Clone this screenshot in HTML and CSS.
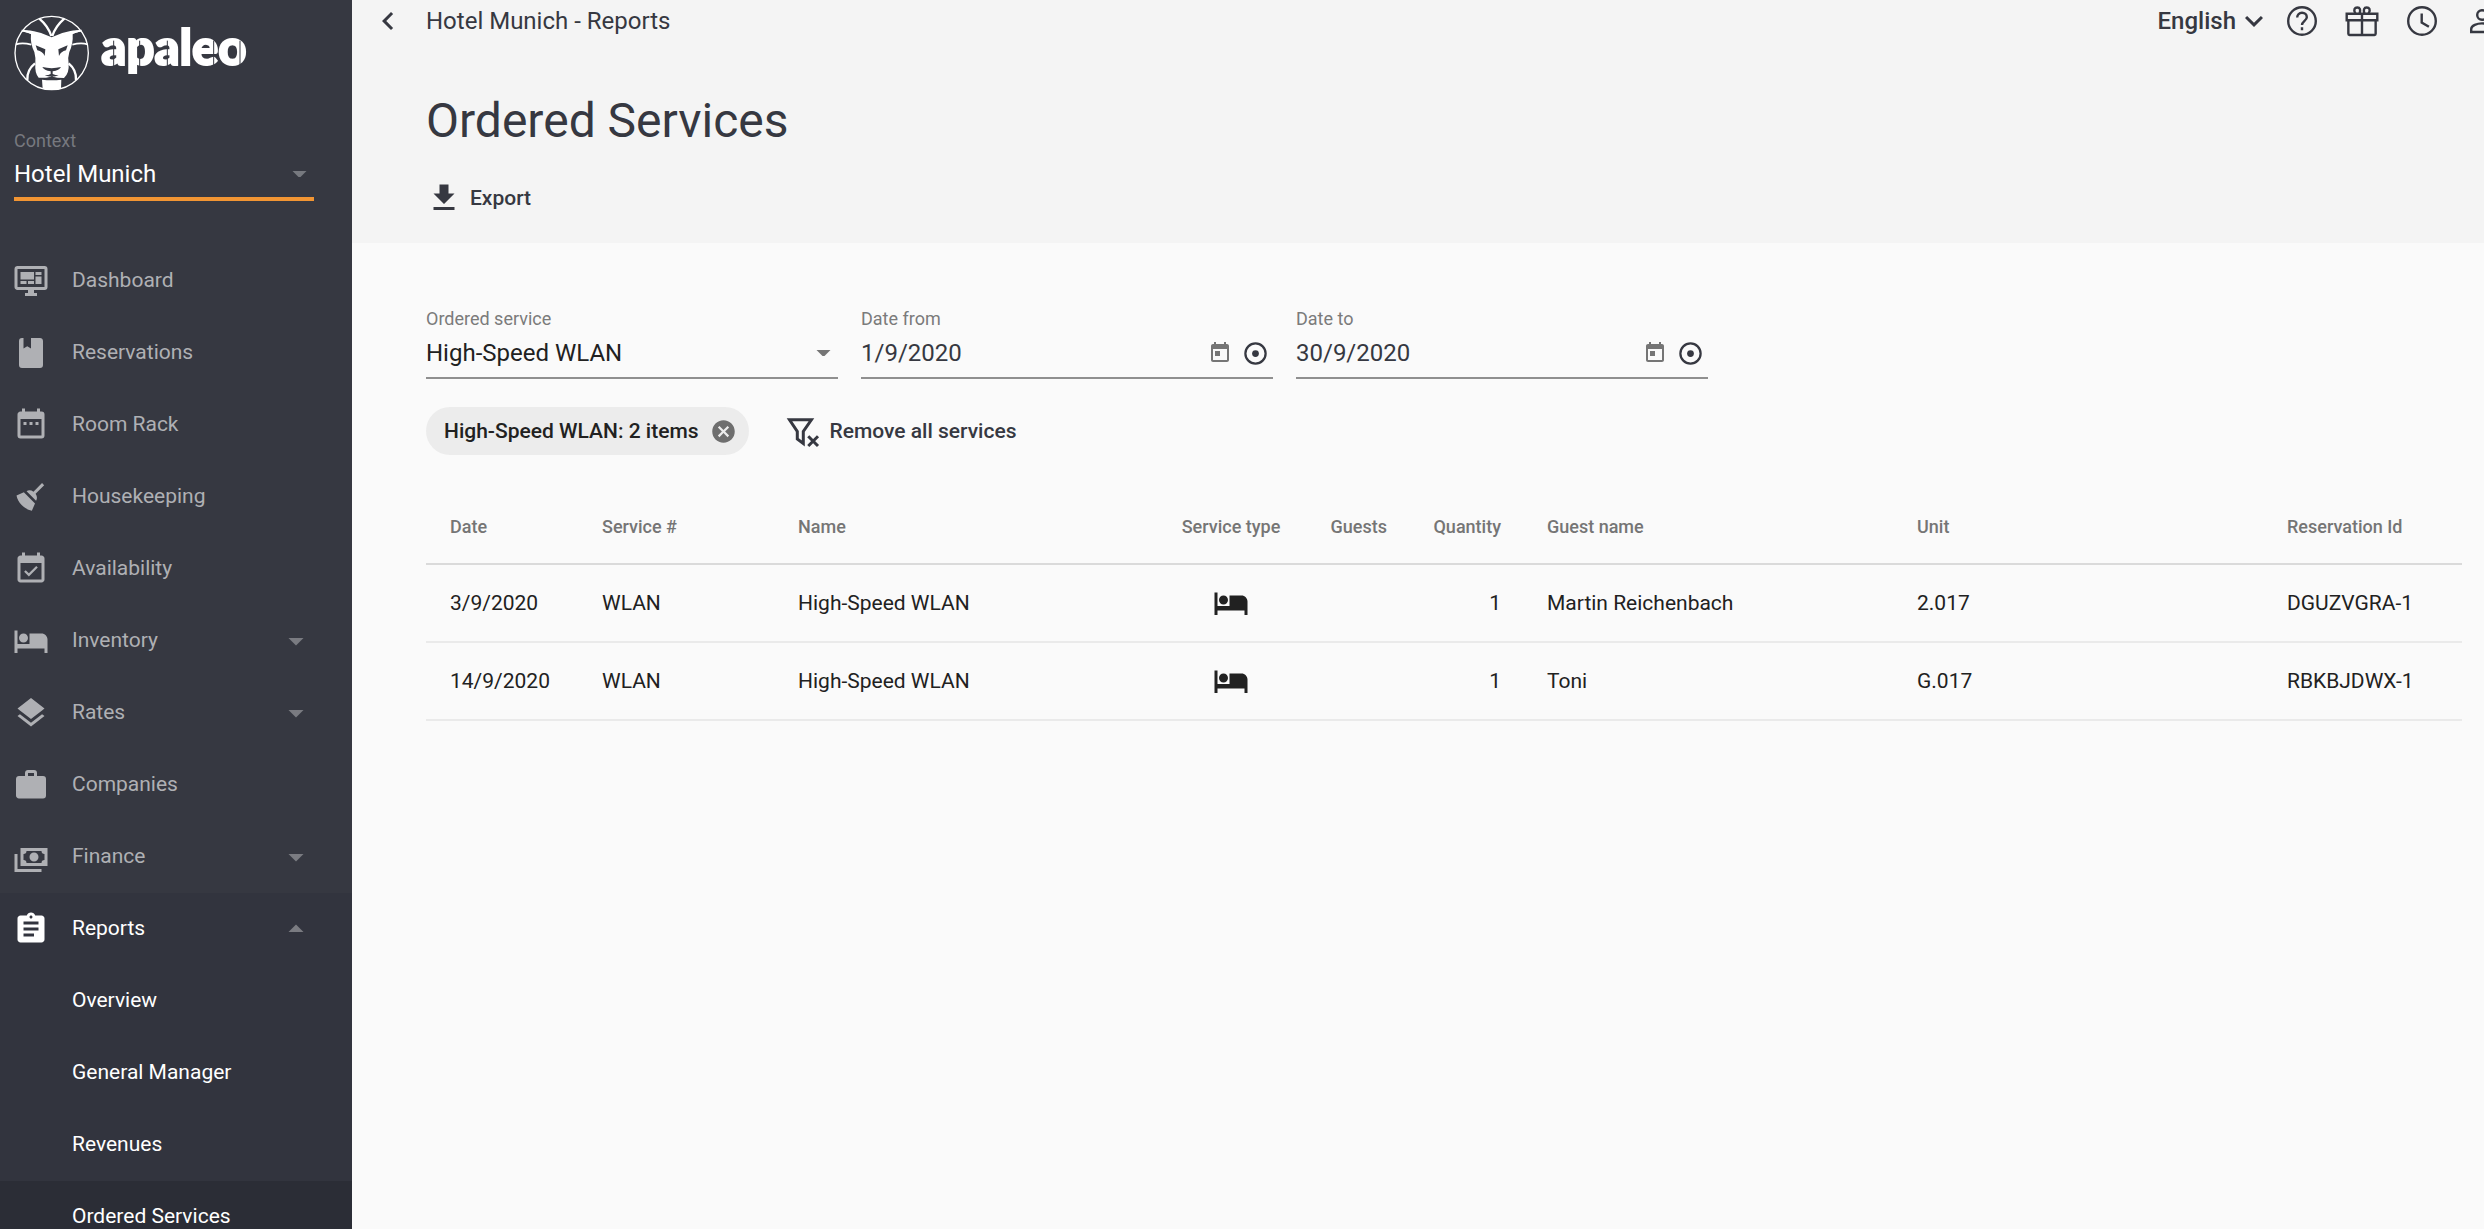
FILE: index.html
```html
<!DOCTYPE html>
<html lang="en">
  <head>
    <meta charset="utf-8">
    <title>Ordered Services - apaleo</title>
    <link rel="stylesheet" href="styles.css">
  </head>
  <body>
    <div class="app">
      <aside class="sidebar">
        <a class="logo" href="#" aria-label="apaleo">
          <svg viewBox="0 0 780 252">
            <!-- lion head -->
            <circle cx="125" cy="129" r="110" fill="none" stroke="#fff" stroke-width="4"/>
            <g fill="none" stroke="#fff" stroke-width="5">
              <path d="M124 78Q114 48 88 26" stroke-width="7"/>
              <path d="M127 78Q137 48 163 26" stroke-width="7"/>
              <path d="M70 73Q52 62 35 62"/>
              <path d="M181 73Q198 62 215 62"/>
              <path d="M64 104Q38 97 18 103"/>
              <path d="M187 104Q213 97 233 103"/>
              <path d="M75 160Q50 180 52 210" stroke-width="7"/>
              <path d="M176 160Q200 180 198 210" stroke-width="7"/>
            </g>
            <path fill="#fff" d="M36 62Q52 58 72 64Q98 68 125 82Q152 68 178 64Q198 58 214 62Q202 68 188 71Q190 100 178 126Q172 145 176 162Q178 190 162 204L142 203Q130 202 126 197Q121 202 108 203L86 203Q74 190 76 162Q78 145 73 126Q60 100 63 71Q48 68 36 62Z"/>
            <path fill="#fff" d="M96 209Q125 213 154 209L153 236Q125 244 98 236Z"/>
            <g fill="#363841">
              <path d="M77 106L106 118L104 138Q98 124 82 121Z"/>
              <path d="M173 106L145 118L147 138Q153 124 168 121Z"/>
              <path d="M97 171Q125 178 153 171Q148 181 128 184L128 192Q136 196 146 196Q132 202 126 197Q118 202 104 196Q116 196 122 192L122 184Q102 181 97 171Z"/>
            </g>
            <text class="logo-text" x="274" y="166">apaleo</text>
            <path d="M311 92v80M389 92v80M472 92v80M611 92v80M690 92v80" stroke="#363841" stroke-width="3"/>
          </svg>
        </a>

        <div class="context">
          <label for="context">Context</label>
          <select id="context">
            <option>Hotel Munich</option>
          </select>
          <svg class="caret" viewBox="0 0 14 6"><path d="M0 0h14L8 6H6z"/></svg>
        </div>

        <nav class="nav">
          <a href="#">
            <svg class="icon" viewBox="0 0 24 24"><path d="M21,16V4H3V16H21M21,2A2,2 0 0,1 23,4V16A2,2 0 0,1 21,18H14V20H16V22H8V20H10V18H3C1.89,18 1,17.1 1,16V4C1,2.89 1.89,2 3,2H21M5,6H14V11H5V6M15,6H19V8H15V6M19,9V14H15V9H19M5,12H9V14H5V12M10,12H14V14H10V12Z"/></svg>
            <span>Dashboard</span>
          </a>
          <a href="#">
            <svg class="icon" viewBox="0 0 24 24"><path d="M18,22A2,2 0 0,0 20,20V4C20,2.89 19.1,2 18,2H12V9L9.5,7.5L7,9V2H6A2,2 0 0,0 4,4V20A2,2 0 0,0 6,22H18Z"/></svg>
            <span>Reservations</span>
          </a>
          <a href="#">
            <svg class="icon" viewBox="0 0 24 24"><path d="M9,10H7V12H9V10M13,10H11V12H13V10M17,10H15V12H17V10M19,3H18V1H16V3H8V1H6V3H5C3.89,3 3,3.9 3,5V19A2,2 0 0,0 5,21H19A2,2 0 0,0 21,19V5A2,2 0 0,0 19,3M19,19H5V8H19V19Z"/></svg>
            <span>Room Rack</span>
          </a>
          <a href="#">
            <svg class="icon" viewBox="0 0 24 24"><path d="M19.36,2.72L20.78,4.14L15.06,9.85C16.13,11.39 16.28,13.24 15.38,14.44L9.06,8.12C10.26,7.22 12.11,7.37 13.65,8.44L19.36,2.72M5.93,17.57C3.92,15.56 2.69,13.16 2.35,10.92L7.23,8.83L14.67,16.27L12.58,21.15C10.34,20.81 7.94,19.58 5.93,17.57Z"/></svg>
            <span>Housekeeping</span>
          </a>
          <a href="#">
            <svg class="icon" viewBox="0 0 24 24"><path d="M16.53 11.06L15.47 10l-4.88 4.88-2.12-2.12-1.06 1.06L10.59 17l5.94-5.94zM19 3h-1V1h-2v2H8V1H6v2H5c-1.11 0-1.99.9-1.99 2L3 19c0 1.1.89 2 2 2h14c1.1 0 2-.9 2-2V5c0-1.1-.9-2-2-2zm0 16H5V8h14v11z"/></svg>
            <span>Availability</span>
          </a>
          <a href="#">
            <svg class="icon" viewBox="0 0 24 24"><path d="M7 13c1.66 0 3-1.34 3-3S8.66 7 7 7s-3 1.34-3 3 1.34 3 3 3zm12-6h-8v7H3V5H1v15h2v-3h18v3h2v-9c0-2.21-1.79-4-4-4z"/></svg>
            <span>Inventory</span>
            <svg class="arrow" viewBox="0 0 24 24"><path d="M7 10l5 5 5-5z"/></svg>
          </a>
          <a href="#">
            <svg class="icon" viewBox="0 0 24 24"><path d="M11.99 18.54l-7.37-5.73L3 14.07l9 7 9-7-1.63-1.27-7.38 5.74zM12 16l7.36-5.73L21 9l-9-7-9 7 1.63 1.27L12 16z"/></svg>
            <span>Rates</span>
            <svg class="arrow" viewBox="0 0 24 24"><path d="M7 10l5 5 5-5z"/></svg>
          </a>
          <a href="#">
            <svg class="icon" viewBox="0 0 24 24"><path d="M10,2H14A2,2 0 0,1 16,4V6H20A2,2 0 0,1 22,8V19A2,2 0 0,1 20,21H4C2.89,21 2,20.1 2,19V8C2,6.89 2.89,6 4,6H8V4C8,2.89 8.89,2 10,2M14,6V4H10V6H14Z"/></svg>
            <span>Companies</span>
          </a>
          <a href="#">
            <svg class="icon" viewBox="0 0 24 24"><path d="M5,6H23V18H5V6M14,9A3,3 0 0,1 17,12A3,3 0 0,1 14,15A3,3 0 0,1 11,12A3,3 0 0,1 14,9M9,8A2,2 0 0,1 7,10V14A2,2 0 0,1 9,16H19A2,2 0 0,1 21,14V10A2,2 0 0,1 19,8H9M1,10H3V20H19V22H1V10Z"/></svg>
            <span>Finance</span>
            <svg class="arrow" viewBox="0 0 24 24"><path d="M7 10l5 5 5-5z"/></svg>
          </a>
          <div class="nav-open">
            <a href="#">
              <svg class="icon" viewBox="0 0 24 24"><path d="M14 17H7v-2h7v2zm3-4H7v-2h10v2zm0-4H7V7h10v2zM19 3h-4.18C14.4 1.84 13.3 1 12 1c-1.3 0-2.4.84-2.82 2H5c-1.1 0-2 .9-2 2v14c0 1.1.9 2 2 2h14c1.1 0 2-.9 2-2V5c0-1.1-.9-2-2-2zm-7 0c.55 0 1 .45 1 1s-.45 1-1 1-1-.45-1-1 .45-1 1-1z"/></svg>
              <span>Reports</span>
              <svg class="arrow" viewBox="0 0 24 24"><path d="M7 14l5-5 5 5z"/></svg>
            </a>
            <a class="sub" href="#"><span>Overview</span></a>
            <a class="sub" href="#"><span>General Manager</span></a>
            <a class="sub" href="#"><span>Revenues</span></a>
            <a class="sub current" href="#"><span>Ordered Services</span></a>
          </div>
        </nav>
      </aside>

      <main class="main">
        <header class="header">
          <div class="toolbar">
            <button class="icon-btn" aria-label="Back">
              <svg class="icon" viewBox="0 0 24 24"><path d="M15.41 7.41L14 6l-6 6 6 6 1.41-1.41L10.83 12z"/></svg>
            </button>
            <span class="crumb">Hotel Munich - Reports</span>
            <div class="tools">
              <button class="lang">
                English
                <svg class="icon" viewBox="0 0 24 24"><path d="M16.59 8.59L12 13.17 7.41 8.59 6 10l6 6 6-6z"/></svg>
              </button>
              <button class="icon-btn" aria-label="Help">
                <svg class="icon line" viewBox="0 0 24 24"><circle cx="12" cy="12" r="9.2"/><path d="M8.8 9.6c0-1.9 1.4-3.1 3.2-3.1s3.2 1.2 3.2 3c0 2.3-3.2 2.5-3.2 5.2M12 16.2v2"/></svg>
              </button>
              <button class="icon-btn" aria-label="What's new">
                <svg class="icon line" viewBox="0 0 24 24"><path d="M1.8 7.2h20.4v4.3H1.8zM2.9 11.5h18.2v9c0 .5-.3.8-.8.8H3.7c-.5 0-.8-.3-.8-.8zM12 7.2v14"/><path d="M7.6 7C6 4.5 7.2 3 8.9 3 10.7 3 11.2 4.6 10.4 7M16.4 7C18 4.5 16.8 3 15.1 3 13.3 3 12.8 4.6 13.6 7"/></svg>
              </button>
              <button class="icon-btn" aria-label="History">
                <svg class="icon line" viewBox="0 0 24 24"><circle cx="12" cy="12" r="9.2"/><path d="M11.8 7v6l4.8 2.8"/></svg>
              </button>
              <button class="icon-btn" aria-label="Account">
                <svg class="icon line" viewBox="0 0 24 24"><circle cx="12" cy="8" r="3.2"/><path d="M4.8 19.3v-2c0-2.3 4-3.7 7.2-3.7s7.2 1.4 7.2 3.7v2z"/></svg>
              </button>
            </div>
          </div>
          <h1>Ordered Services</h1>
          <button class="text-btn export">
            <svg class="icon" viewBox="0 0 24 24"><path d="M5,20H19V18H5M19,9H15V3H9V9H5L12,16L19,9Z"/></svg>
            Export
          </button>
        </header>

        <section class="content">
          <form class="filters">
            <div class="field">
              <label for="service">Ordered service</label>
              <div class="control">
                <select id="service">
                  <option>High-Speed WLAN</option>
                </select>
                <svg class="caret" viewBox="0 0 14 6"><path d="M0 0h14L8 6H6z"/></svg>
              </div>
            </div>
            <div class="field">
              <label for="from">Date from</label>
              <div class="control">
                <input type="text" id="from" value="1/9/2020">
                <button type="button" class="icon-btn calendar" aria-label="Open calendar">
                  <svg viewBox="0 0 24 24"><path d="M19 3h-1V1h-2v2H8V1H6v2H5c-1.1 0-2 .9-2 2v14c0 1.1.9 2 2 2h14c1.1 0 2-.9 2-2V5c0-1.1-.9-2-2-2zm0 16H5V8h14v11zM7 10h5v5H7z"/></svg>
                </button>
                <button type="button" class="icon-btn today" aria-label="Today">
                  <svg viewBox="0 0 24 24"><circle class="ring" cx="12" cy="12" r="9"/><circle cx="12" cy="12" r="3"/></svg>
                </button>
              </div>
            </div>
            <div class="field">
              <label for="to">Date to</label>
              <div class="control">
                <input type="text" id="to" value="30/9/2020">
                <button type="button" class="icon-btn calendar" aria-label="Open calendar">
                  <svg viewBox="0 0 24 24"><path d="M19 3h-1V1h-2v2H8V1H6v2H5c-1.1 0-2 .9-2 2v14c0 1.1.9 2 2 2h14c1.1 0 2-.9 2-2V5c0-1.1-.9-2-2-2zm0 16H5V8h14v11zM7 10h5v5H7z"/></svg>
                </button>
                <button type="button" class="icon-btn today" aria-label="Today">
                  <svg viewBox="0 0 24 24"><circle class="ring" cx="12" cy="12" r="9"/><circle cx="12" cy="12" r="3"/></svg>
                </button>
              </div>
            </div>
          </form>

          <div class="chips">
            <div class="chip">
              <span>High-Speed WLAN: 2 items</span>
              <button class="icon-btn remove" aria-label="Remove">
                <svg viewBox="0 0 24 24"><path d="M12 2C6.47 2 2 6.47 2 12s4.47 10 10 10 10-4.47 10-10S17.53 2 12 2zm5 13.59L15.59 17 12 13.41 8.41 17 7 15.59 10.59 12 7 8.41 8.41 7 12 10.59 15.59 7 17 8.41 13.41 12 17 15.59z"/></svg>
              </button>
            </div>
            <button class="text-btn">
              <svg class="icon line bold" viewBox="0 0 24 24"><path d="M3 4.5h14.6L12.2 12.3v8l-4-3v-5zM15.5 15.5l6.5 6.5M22 15.5l-6.5 6.5"/></svg>
              Remove all services
            </button>
          </div>

          <table class="services">
            <thead>
              <tr>
                <th class="c-date">Date</th>
                <th class="c-code">Service #</th>
                <th>Name</th>
                <th class="c-type">Service type</th>
                <th class="c-guests">Guests</th>
                <th class="c-qty">Quantity</th>
                <th>Guest name</th>
                <th>Unit</th>
                <th class="c-res">Reservation Id</th>
              </tr>
            </thead>
            <tbody>
              <tr>
                <td class="c-date">3/9/2020</td>
                <td>WLAN</td>
                <td>High-Speed WLAN</td>
                <td class="c-type"><svg class="icon" viewBox="0 0 24 24"><path d="M7 13c1.66 0 3-1.34 3-3S8.66 7 7 7s-3 1.34-3 3 1.34 3 3 3zm12-6h-8v7H3V5H1v15h2v-3h18v3h2v-9c0-2.21-1.79-4-4-4z"/></svg></td>
                <td class="c-guests"></td>
                <td class="c-qty">1</td>
                <td>Martin Reichenbach</td>
                <td>2.017</td>
                <td>DGUZVGRA-1</td>
              </tr>
              <tr>
                <td class="c-date">14/9/2020</td>
                <td>WLAN</td>
                <td>High-Speed WLAN</td>
                <td class="c-type"><svg class="icon" viewBox="0 0 24 24"><path d="M7 13c1.66 0 3-1.34 3-3S8.66 7 7 7s-3 1.34-3 3 1.34 3 3 3zm12-6h-8v7H3V5H1v15h2v-3h18v3h2v-9c0-2.21-1.79-4-4-4z"/></svg></td>
                <td class="c-guests"></td>
                <td class="c-qty">1</td>
                <td>Toni</td>
                <td>G.017</td>
                <td>RBKBJDWX-1</td>
              </tr>
            </tbody>
          </table>
        </section>
      </main>
    </div>
  </body>
</html>
```

FILE: styles.css
```css
* {
  box-sizing: border-box;
}

body {
  margin: 0;
  font-family: Roboto, "Liberation Sans", sans-serif;
  font-size: 21px;
  color: #212121;
  background: #fafafa;
}

button, input, select {
  font: inherit;
  color: inherit;
  background: none;
  border: 0;
  padding: 0;
  margin: 0;
  outline: 0;
}

button {
  cursor: pointer;
}

select {
  appearance: none;
}

a {
  color: inherit;
  text-decoration: none;
}

svg {
  display: block;
  fill: currentColor;
}

.app {
  display: flex;
  height: 100vh;
  overflow: hidden;
}

.icon {
  width: 36px;
  height: 36px;
  flex: none;
}

.icon.line {
  fill: none;
  stroke: currentColor;
  stroke-width: 1.6;
}

.icon.bold {
  stroke-width: 2;
}

.caret {
  position: absolute;
  right: 7px;
  top: 50%;
  width: 15px;
  height: 6px;
  margin-top: -3px;
  color: #757575;
  pointer-events: none;
}

/* sidebar */

.sidebar {
  flex: none;
  width: 352px;
  background: #363841;
  color: #fff;
  overflow: hidden;
}

.logo {
  display: block;
  padding: 10px 10px 0;
}

.logo svg {
  width: 260px;
  height: 84px;
}

.logo-text {
  font-family: Lato, sans-serif;
  font-weight: 900;
  font-size: 147px;
  fill: #fff;
  stroke: #fff;
  stroke-width: 6;
}

.context {
  position: relative;
  margin: 37px 38px 44px 14px;
  border-bottom: 4px solid #f29533;
}

.context label {
  display: block;
  font-size: 18px;
  line-height: 20px;
  color: #77797f;
}

.context select {
  display: block;
  width: 100%;
  height: 46px;
  font-size: 24px;
}

.context select option {
  color: #212121;
}

.context .caret {
  top: auto;
  bottom: 20px;
  color: #77797f;
}

.nav a {
  display: flex;
  align-items: center;
  height: 72px;
  padding: 0 38px 0 13px;
  color: #afb0b4;
}

.nav span {
  flex: 1;
  margin-left: 23px;
  padding-bottom: 3px;
}

.nav .sub span {
  margin-left: 59px;
}

.nav .arrow {
  width: 36px;
  height: 36px;
  color: #7a7b81;
}

.nav .nav-open {
  background: #32343e;
}

.nav .nav-open a {
  color: #fff;
}

.nav .nav-open .arrow {
  color: #7a7b81;
}

.nav .nav-open .current {
  background: #2b2d36;
}

/* header */

.main {
  flex: 1;
  min-width: 0;
}

.header {
  padding: 0 0 27px 18px;
  background: #f4f4f4;
  color: #363841;
  overflow: hidden;
}

.toolbar {
  display: flex;
  align-items: center;
  height: 42px;
  font-size: 24px;
}

.icon-btn {
  flex: none;
}

.crumb {
  margin-left: 20px;
}

/* the tools run past the right edge */
.tools {
  display: flex;
  gap: 24px;
  margin-left: auto;
  margin-right: -16px;
}

.lang {
  display: flex;
  align-items: center;
  font-weight: 500;
  margin-right: -12px;
}

h1 {
  margin: 51px 0 31px 56px;
  font-size: 48px;
  line-height: 56px;
  font-weight: 400;
}

.text-btn {
  display: flex;
  align-items: center;
  gap: 8px;
  font-weight: 500;
  color: #363841;
}

.export {
  margin-left: 56px;
}

/* content */

.content {
  padding: 66px 22px 36px 74px;
}

.filters {
  display: flex;
  gap: 23px;
}

.field {
  width: 412px;
}

.field label {
  display: block;
  font-size: 18px;
  line-height: 20px;
  color: #7b7b7b;
}

.control {
  position: relative;
  display: flex;
  align-items: center;
  height: 50px;
  padding-right: 4px;
  border-bottom: 2px solid #8f8f8f;
  font-size: 24px;
}

.control input,
.control select {
  flex: 1;
  min-width: 0;
}

.control input {
  color: #363841;
}

.calendar {
  margin-right: 10px;
  color: #757575;
}

.calendar svg {
  width: 24px;
  height: 24px;
}

.today {
  color: #363841;
}

.today svg {
  width: 27px;
  height: 27px;
}

.ring {
  fill: none;
  stroke: currentColor;
  stroke-width: 2;
}

.chips {
  display: flex;
  align-items: center;
  gap: 36px;
  margin: 28px 0 36px;
}

.chip {
  display: flex;
  align-items: center;
  gap: 12px;
  height: 48px;
  padding: 0 12px 0 18px;
  border-radius: 24px;
  background: #ececec;
  font-weight: 500;
}

.remove svg {
  width: 27px;
  height: 27px;
  color: #6e6e6e;
}

.services {
  width: 100%;
  table-layout: fixed;
  border-collapse: separate;
  border-spacing: 0;
}

.services th,
.services td {
  padding: 0;
  text-align: left;
}

.services th {
  height: 74px;
  padding-bottom: 2px;
  border-bottom: 2px solid #dadada;
  font-size: 18px;
  font-weight: 500;
  color: #757575;
}

.services td {
  height: 78px;
  border-bottom: 2px solid #eaeaea;
}

.services .c-date {
  width: 176px;
  padding-left: 24px;
}

.c-code {
  width: 196px;
}

.services .c-type {
  width: 126px;
  text-align: center;
}

.c-type .icon {
  margin: 0 auto;
}

.services .c-guests {
  width: 93px;
  text-align: right;
}

.services .c-qty {
  width: 160px;
  padding-right: 46px;
  text-align: right;
}

.c-res {
  width: 175px;
}
```
